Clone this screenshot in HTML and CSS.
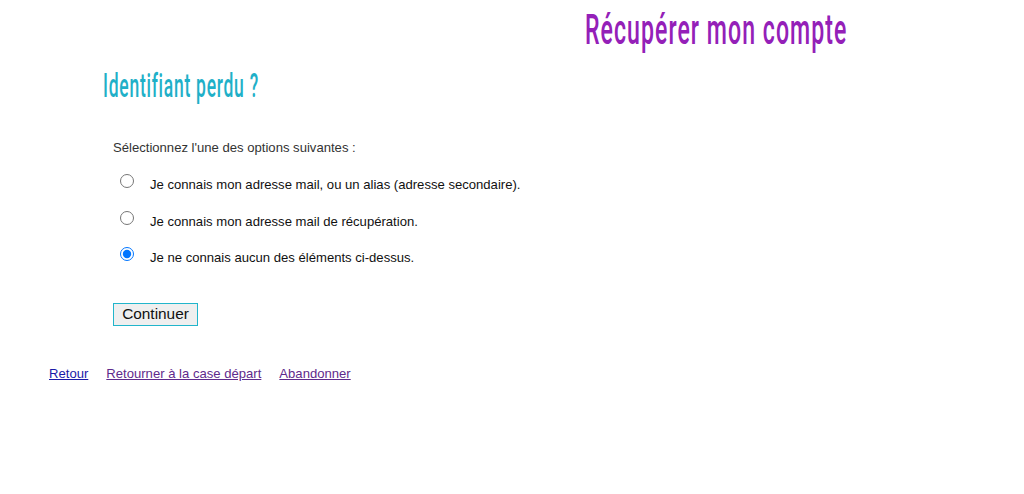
FILE: index.html
```html
<!DOCTYPE html>
<html lang="fr">
<head>
  <meta charset="UTF-8" />
  <meta name="viewport" content="width=device-width, initial-scale=1.0"/>
  <title>Récupérer mon compte</title>
  <link rel="stylesheet" href="styles.css">
</head>
<body>
  <div class="header">
    <h1>Récupérer mon compte</h1>
  </div>

  <main>
    <h2>Identifiant perdu ?</h2>

    <form class="recovery-form">
      <p class="intro">Sélectionnez l'une des options suivantes :</p>

      <div class="form-group">
        <input type="radio" id="mail" name="option" />
        <label for="mail">Je connais mon adresse mail, ou un alias (adresse secondaire).</label>
      </div>

      <div class="form-group">
        <input type="radio" id="recup" name="option" />
        <label for="recup">Je connais mon adresse mail de récupération.</label>
      </div>

      <div class="form-group">
        <input type="radio" id="aucun" name="option" checked />
        <label for="aucun">Je ne connais aucun des éléments ci-dessus.</label>
      </div>

      <button type="submit" class="submit-btn">Continuer</button>
    </form>

    <nav class="links">
      <a href="#retour">Retour</a>
      <a href="#depart" class="visited">Retourner à la case départ</a>
      <a href="#abandon" class="visited">Abandonner</a>
    </nav>
  </main>
</body>
</html>
```

FILE: styles.css
```css
* {
  margin: 0;
  padding: 0;
  box-sizing: border-box;
  font-family: 'Liberation Sans', Arial, sans-serif;
}

body {
  background: #fff;
  height: 494px;
  overflow: hidden;
}

.header {
  height: 62px;
  padding: 5px 0 0 585px;
}

h1 {
  width: 261px;
  font-family: 'Roboto', sans-serif;
  font-size: 42px;
  line-height: 50px;
  font-weight: 500;
  letter-spacing: 1.9px;
  color: #9420b8;
  white-space: nowrap;
  transform: scaleX(0.55);
  transform-origin: left center;
}

h2 {
  margin-left: 103px;
  font-family: 'Roboto', sans-serif;
  font-size: 33px;
  line-height: 48px;
  font-weight: 500;
  letter-spacing: 1.4px;
  color: #1fb0c8;
  white-space: nowrap;
  transform: scaleX(0.53);
  transform-origin: left center;
}

.recovery-form {
  padding: 30px 0 0 113px;
}

.intro {
  font-size: 13.1px;
  line-height: 15px;
  color: #333;
  margin-bottom: 19px;
}

.form-group {
  display: flex;
  align-items: flex-start;
  height: 36.5px;
}

.form-group input {
  width: 14px;
  height: 14px;
  margin: 0 0 0 7px;
  accent-color: #0075ff;
}

label {
  margin: 3px 0 0 16px;
  font-size: 13.1px;
  line-height: 15px;
  color: #111;
}

.submit-btn {
  display: block;
  margin-top: 19.5px;
  width: 85px;
  height: 23px;
  padding-bottom: 2px;
  background: #efefef;
  border-width: 1px;
  border-style: solid;
  border-color: #22b5cb;
  font-size: 15.4px;
  color: #111;
}

.links {
  display: flex;
  gap: 18px;
  margin: 40px 0 0 49px;
  font-size: 13.1px;
  line-height: 15px;
}

.links a {
  color: #1a1aa8;
}

.links a.visited {
  color: #5f2a8c;
}
```
